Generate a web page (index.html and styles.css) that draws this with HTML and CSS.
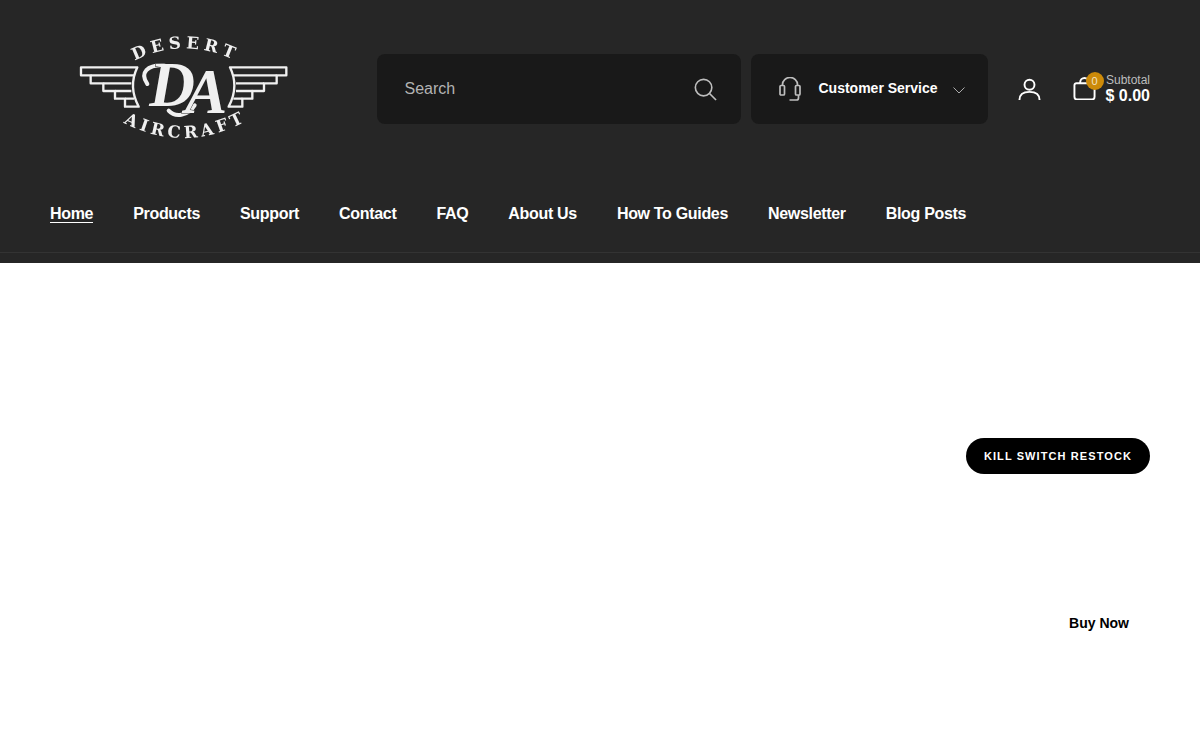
FILE: index.html
```html
<!DOCTYPE html>
<html>
<head>
  <meta charset="utf-8">
  <link rel="stylesheet" href="styles.css">
</head>
<body>
  <header class="site-header">
    <div class="header-top">
      <a class="logo" href="#">
        <svg viewBox="0 0 750 375" width="250" height="125">
          <defs>
            <path id="arcTop" d="M224 104 Q372 30 526 104"/>
            <path id="arcBottom" d="M190 290 Q372 384 556 286"/>
            <filter id="soft"><feGaussianBlur stdDeviation="1.300"/></filter>
          </defs>
          <g filter="url(#soft)">
            <g class="wing">
              <path d="M232 124H63V148H92V172H130V195H165V218H195V242H236Q204 182 232 124Z"/>
              <path d="M92 148H222M130 172H214M165 195H214M195 218H222"/>
            </g>
            <g class="wing">
              <path d="M510 124H679V148H650V172H612V195H577V218H547V242H506Q538 182 510 124Z"/>
              <path d="M650 148H520M612 172H528M577 195H528M547 218H520"/>
            </g>
            <text class="logo-word"><textPath href="#arcTop" textLength="304">DESERT</textPath></text>
            <text class="logo-word"><textPath href="#arcBottom" textLength="378">AIRCRAFT</textPath></text>
            <path class="logo-swash" d="M262 174C238 140 262 116 312 118M326 254C344 274 384 272 404 238"/>
            <text class="logo-mono" x="268" y="240">D<tspan dx="-30" dy="20">A</tspan></text>
          </g>
        </svg>
      </a>

      <form class="search-box">
        <input class="search-input" type="text" placeholder="Search">
        <svg class="search-icon" viewBox="0 0 24 24">
          <circle cx="10" cy="10" r="8.600"/>
          <path d="M16.200 16.200L23 23"/>
        </svg>
      </form>

      <div class="service-box">
        <svg class="service-icon" viewBox="0 0 22 24">
          <path d="M3.500 8V7.500a7.500 7 0 0 1 15 0V8"/>
          <rect x="1" y="8.500" width="4.500" height="9.500" rx="1"/>
          <rect x="16.500" y="8.500" width="4.500" height="9.500" rx="1"/>
          <path d="M19.500 18v3a2 2 0 0 1-2 2h-7"/>
        </svg>
        <span class="service-label">Customer Service</span>
        <svg class="service-caret" viewBox="0 0 12 7">
          <path d="M.5 .5L6 6L11.500 .5"/>
        </svg>
      </div>

      <a class="account-link" href="#">
        <svg viewBox="0 0 24 24">
          <circle cx="12" cy="7" r="5.200"/>
          <path d="M1.500 23c0-5.500 4-8.500 10.500-8.500s10.500 3 10.500 8.500"/>
        </svg>
      </a>

      <a class="cart-link" href="#">
        <span class="cart-icon">
          <svg viewBox="0 0 24 24">
            <path d="M3.500 6.500h17a2 2 0 0 1 2 2v12a3 3 0 0 1-3 3h-15a3 3 0 0 1-3-3v-12a2 2 0 0 1 2-2z"/>
            <path d="M7.500 6.500v-1a4.500 4.500 0 0 1 9 0v1"/>
          </svg>
          <span class="cart-count">0</span>
        </span>
        <span class="cart-info">
          <span class="cart-label">Subtotal</span>
          <span class="cart-total">$ 0.00</span>
        </span>
      </a>
    </div>

    <nav class="main-nav">
      <a class="active" href="#">Home</a>
      <a href="#">Products</a>
      <a href="#">Support</a>
      <a href="#">Contact</a>
      <a href="#">FAQ</a>
      <a href="#">About Us</a>
      <a href="#">How To Guides</a>
      <a href="#">Newsletter</a>
      <a href="#">Blog Posts</a>
    </nav>
  </header>

  <main class="content">
    <a class="pill-link" href="#">KILL SWITCH RESTOCK</a>
    <a class="buy-link" href="#">Buy Now</a>
  </main>
</body>
</html>
```

FILE: styles.css
```css
* {
  box-sizing: border-box;
}

body {
  margin: 0;
  font-family: "Liberation Sans", Arial, sans-serif;
  background: #fff;
  color: #000;
}

a {
  color: inherit;
  text-decoration: none;
}

.site-header {
  height: 263px;
  background: #262626;
  color: #fff;
}

.header-top {
  display: flex;
  align-items: center;
  height: 178px;
  padding: 0 50px;
}

.logo {
  display: block;
  width: 327px;
  height: 125px;
  padding-left: 10px;
  flex: none;
  margin-top: -1px;
}

.logo svg {
  display: block;
}

.wing path {
  fill: none;
  stroke: #f0f0f0;
  stroke-width: 7;
  stroke-linejoin: round;
}

.logo-word {
  font-family: "DejaVu Serif", serif;
  font-size: 50px;
  font-weight: 700;
  fill: #f0f0f0;
}

.logo-mono {
  font-family: "Liberation Serif", "Times New Roman", serif;
  font-size: 190px;
  font-style: italic;
  font-weight: 700;
  fill: #f0f0f0;
  stroke: #262626;
  stroke-width: 3;
  paint-order: stroke;
}

.logo-swash {
  fill: none;
  stroke: #f0f0f0;
  stroke-width: 12;
  stroke-linecap: round;
}

.search-box {
  display: flex;
  align-items: center;
  width: 364px;
  height: 70px;
  margin: 0 10px 0 0;
  padding: 0 24px 0 27.500px;
  background: #191919;
  border-radius: 8px;
}

.search-input {
  flex: 1;
  min-width: 0;
  padding: 0;
  background: none;
  border: none;
  outline: none;
  color: #fff;
  font-family: inherit;
  font-size: 16px;
}

.search-input::placeholder {
  color: #b3b3b3;
  opacity: 1;
}

.search-icon {
  width: 23px;
  height: 23px;
  fill: none;
  stroke: #bdbdbd;
  stroke-width: 1.700;
}

.service-box {
  display: flex;
  align-items: center;
  width: 237px;
  height: 70px;
  padding: 0 23px 0 28px;
  background: #191919;
  border-radius: 8px;
}

.service-icon {
  width: 22px;
  height: 24px;
  margin-right: 17.500px;
  fill: none;
  stroke: #bdbdbd;
  stroke-width: 1.700;
}

.service-label {
  margin-bottom: 2px;
  font-size: 14px;
  font-weight: 700;
  white-space: nowrap;
}

.service-caret {
  width: 12px;
  height: 7px;
  margin-top: 2px;
  margin-left: auto;
  fill: none;
  stroke: #aaa;
  stroke-width: 1;
}

.account-link {
  display: block;
  width: 23px;
  height: 23px;
  margin-left: 30px;
}

.account-link svg {
  display: block;
  width: 23px;
  height: 23px;
  fill: none;
  stroke: #fff;
  stroke-width: 2;
}

.cart-link {
  display: flex;
  align-items: center;
  margin-left: auto;
  margin-bottom: 2px;
}

.cart-icon {
  position: relative;
  display: block;
  width: 23px;
  height: 23px;
  margin-right: 10px;
}

.cart-icon svg {
  display: block;
  width: 23px;
  height: 23px;
  fill: none;
  stroke: #fff;
  stroke-width: 2;
}

.cart-count {
  position: absolute;
  top: -5px;
  left: 13px;
  width: 18px;
  height: 18px;
  background: #cc8a09;
  border-radius: 50%;
  color: #f3e3c3;
  font-size: 11px;
  line-height: 18px;
  text-align: center;
}

.cart-info {
  display: flex;
  flex-direction: column;
  align-items: flex-end;
}

.cart-label {
  color: #bdbdbd;
  font-size: 12px;
  line-height: 14px;
}

.cart-total {
  font-size: 16px;
  font-weight: 700;
  line-height: 17px;
}

.main-nav {
  display: flex;
  gap: 40px;
  height: 75px;
  padding: 27px 50px 0;
  border-bottom: 1px solid #333;
}

.main-nav a {
  height: 18px;
  font-size: 16px;
  font-weight: 700;
  line-height: 18px;
  letter-spacing: -0.32px;
  white-space: nowrap;
}

.main-nav a.active {
  border-bottom: 1px solid #fff;
}

.content {
  display: flex;
  flex-direction: column;
  align-items: flex-end;
  padding: 175px 50px 0;
}

.pill-link {
  width: 184px;
  height: 36px;
  background: #000;
  border-radius: 18px;
  color: #fff;
  font-size: 11px;
  font-weight: 700;
  line-height: 36px;
  letter-spacing: 1.100px;
  text-align: center;
  white-space: nowrap;
}

.buy-link {
  margin: 141px 21px 0 0;
  font-size: 14px;
  font-weight: 700;
  line-height: 16px;
}
```
